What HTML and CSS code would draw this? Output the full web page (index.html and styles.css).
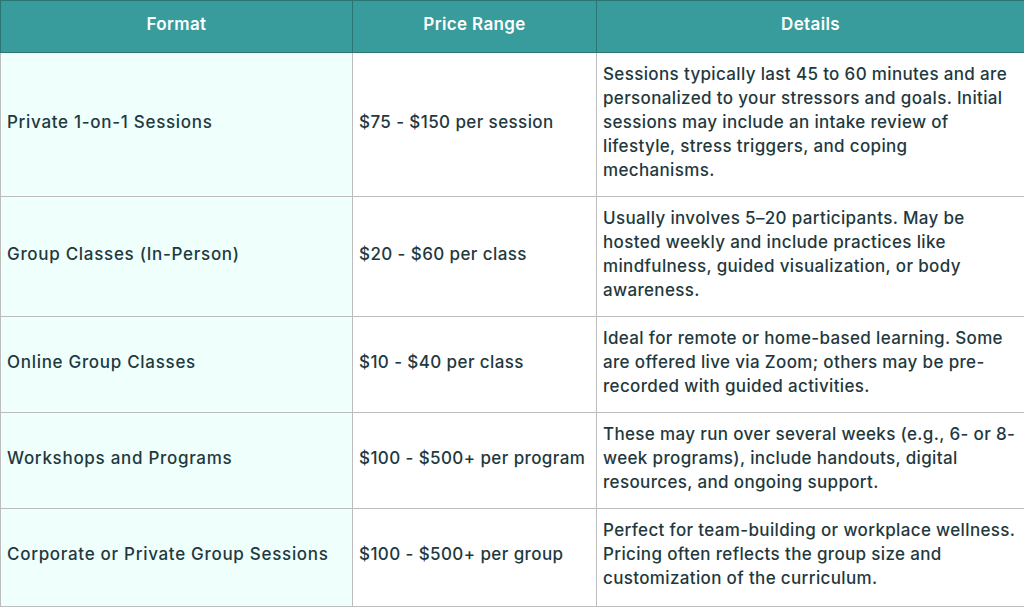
FILE: index.html
```html
<!DOCTYPE html>
<html lang="en">
<head>
<meta charset="utf-8">
<title>Pricing Formats</title>
<link rel="stylesheet" href="styles.css">
</head>
<body>
<table class="price-table">
  <colgroup>
    <col class="col-format">
    <col class="col-price">
    <col class="col-details">
  </colgroup>
  <thead>
    <tr>
      <th>Format</th>
      <th>Price Range</th>
      <th>Details</th>
    </tr>
  </thead>
  <tbody>
    <tr>
      <td class="format">Private 1-on-1 Sessions</td>
      <td class="price">$75 - $150 per session</td>
      <td class="details">Sessions typically last 45 to 60 minutes and are personalized to your stressors and goals. Initial sessions may include an intake review of lifestyle, stress triggers, and coping mechanisms.</td>
    </tr>
    <tr>
      <td class="format">Group Classes (In-Person)</td>
      <td class="price">$20 - $60 per class</td>
      <td class="details">Usually involves 5–20 participants. May be hosted weekly and include practices like mindfulness, guided visualization, or body awareness.</td>
    </tr>
    <tr>
      <td class="format">Online Group Classes</td>
      <td class="price">$10 - $40 per class</td>
      <td class="details">Ideal for remote or home-based learning. Some are offered live via Zoom; others may be pre-recorded with guided activities.</td>
    </tr>
    <tr>
      <td class="format">Workshops and Programs</td>
      <td class="price">$100 - $500+ per program</td>
      <td class="details">These may run over several weeks (e.g., 6- or 8-week programs), include handouts, digital resources, and ongoing support.</td>
    </tr>
    <tr class="last">
      <td class="format">Corporate or Private Group Sessions</td>
      <td class="price">$100 - $500+ per group</td>
      <td class="details">Perfect for team-building or workplace wellness. Pricing often reflects the group size and customization of the curriculum.</td>
    </tr>
  </tbody>
</table>
</body>
</html>
```

FILE: styles.css
```css
html, body {
  margin: 0;
  padding: 0;
  background: #ffffff;
}

body {
  font-family: "Inter", "Liberation Sans", sans-serif;
  color: #1f393e;
}

.price-table {
  width: 1024px;
  border-collapse: collapse;
  table-layout: fixed;
  font-size: 17px;
  line-height: 24px;
  font-weight: 500;
  letter-spacing: 0.35px;
}

.col-format { width: 352px; }
.col-price { width: 244px; }
.col-details { width: 428px; }

.price-table th {
  background: #379c9b;
  color: #ffffff;
  font-weight: 600;
  height: 52px;
  padding: 0 6px 5px;
  text-align: center;
  border: 1px solid #2b7674;
  box-sizing: border-box;
}

.price-table td {
  padding: 9px 6px 14px 6px;
  border: 1px solid #bdbdbd;
  vertical-align: middle;
  text-align: left;
}

.price-table tr.last td {
  padding-bottom: 16px;
}

.price-table td.format {
  background: #effffc;
  letter-spacing: 0.7px;
}

.price-table td.price {
  letter-spacing: 0.4px;
}
```
